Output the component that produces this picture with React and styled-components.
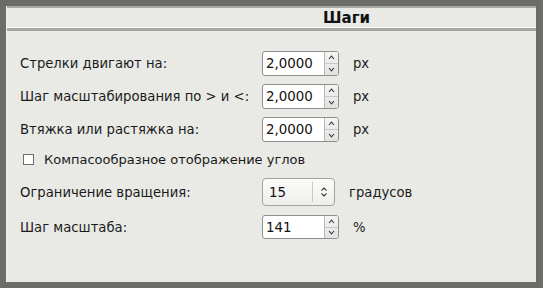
import styled, { createGlobalStyle } from "styled-components";

const GlobalStyle = createGlobalStyle`
  html, body {
    margin: 0;
    padding: 0;
    background: #6b6b68;
  }
  body {
    font-family: "DejaVu Sans", Verdana, sans-serif;
  }
`

const Frame = styled.div`
  width: 543px;
  height: 288px;
  box-sizing: border-box;
  padding: 6px 7px 6px 6px;
`

const Panel = styled.div`
  height: 100%;
  background: #e9eae6;
  display: flex;
  flex-direction: column;
  border-left: 1px solid #f1f1ef;
  box-sizing: border-box;
`

const Header = styled.div`
  height: 22px;
  box-sizing: border-box;
  border-top: 2px solid #aaa6a4;
  border-bottom: 1px solid #ffffff;
  display: flex;
  align-items: center;
  padding-left: 316px;
  font-size: 15px;
  font-weight: bold;
  color: #111;
`

const HeaderRule = styled.div`
  height: 3px;
  background: #aaa6a4;
`

const Form = styled.div`
  display: flex;
  flex-direction: column;
  padding: 20px 0 0 13px;
`

const Row = styled.div`
  display: flex;
  align-items: center;
  height: ${({ $h }) => $h}px;
  margin-top: ${({ $mt }) => $mt || 0}px;
  font-size: 13.2px;
  color: #1a1a1a;
`

const Label = styled.span`
  width: 242px;
  flex: none;
`

const Unit = styled.span`
  margin-left: ${({ $ml }) => $ml}px;
`

const SpinBox = styled.div`
  width: 77px;
  height: 100%;
  box-sizing: border-box;
  border: 1px solid #8e8e8c;
  border-radius: 3px;
  background: #fff;
  display: flex;
  overflow: hidden;
`

const SpinText = styled.span`
  flex: 1;
  display: flex;
  align-items: center;
  padding-left: 3px;
  font-size: 13.4px;
  color: #111;
`

const SpinButtons = styled.div`
  width: 13px;
  border-left: 1px solid #b8b8b6;
  background: linear-gradient(#f4f4f3, #e2e2e0);
  display: flex;
  flex-direction: column;
`

const SpinHalf = styled.div`
  flex: 1;
  display: flex;
  align-items: center;
  justify-content: center;
  & + & {
    border-top: 1px solid #c8c8c6;
  }
`

const Combo = styled.div`
  width: 73px;
  height: 100%;
  box-sizing: border-box;
  border: 1px solid #a3a3a0;
  border-radius: 4px;
  background: linear-gradient(#fbfbfa, #eeeeec);
  display: flex;
  align-items: center;
`

const ComboText = styled.span`
  flex: 1;
  padding-left: 6px;
  font-size: 13.4px;
  color: #111;
`

const ComboSep = styled.div`
  width: 1px;
  height: 20px;
  background: #c9c9c6;
`

const ComboArrow = styled.div`
  width: 21px;
  display: flex;
  justify-content: center;
`

const CheckRow = styled.label`
  display: flex;
  align-items: center;
  height: 18px;
  margin-top: 8px;
  padding-left: 3px;
  font-size: 13px;
  color: #1a1a1a;
`

const CheckBox = styled.span`
  width: 9px;
  height: 9px;
  border: 1px solid #6f6f6d;
  background: #fff;
  margin-right: 10px;
`

function Chevron({ up }) {
  return (
    <svg width="7" height="5" viewBox="0 0 7 5">
      <path
        d={up ? "M1 4 L3.5 1.2 L6 4" : "M1 1 L3.5 3.8 L6 1"}
        fill="none"
        stroke="#3a3a3a"
        strokeWidth="1.1"
      />
    </svg>
  )
}

function Spin({ value }) {
  return (
    <SpinBox>
      <SpinText>{value}</SpinText>
      <SpinButtons>
        <SpinHalf><Chevron up /></SpinHalf>
        <SpinHalf><Chevron /></SpinHalf>
      </SpinButtons>
    </SpinBox>
  )
}

export default function App() {
  return (
    <Frame>
      <GlobalStyle />
      <Panel>
        <Header>Шаги</Header>
        <HeaderRule />
        <Form>
          <Row $h={25}>
            <Label>Стрелки двигают на:</Label>
            <Spin value="2,0000" />
            <Unit $ml={14}>px</Unit>
          </Row>
          <Row $h={25} $mt={8}>
            <Label>Шаг масштабирования по &gt; и &lt;:</Label>
            <Spin value="2,0000" />
            <Unit $ml={14}>px</Unit>
          </Row>
          <Row $h={25} $mt={8}>
            <Label>Втяжка или растяжка на:</Label>
            <Spin value="2,0000" />
            <Unit $ml={14}>px</Unit>
          </Row>
          <CheckRow>
            <CheckBox />
            Компасообразное отображение углов
          </CheckRow>
          <Row $h={28} $mt={10}>
            <Label>Ограничение вращения:</Label>
            <Combo>
              <ComboText>15</ComboText>
              <ComboSep />
              <ComboArrow>
                <svg width="8" height="12" viewBox="0 0 8 12">
                  <path d="M1.5 4.5 L4 2 L6.5 4.5 M1.5 7.5 L4 10 L6.5 7.5" fill="none" stroke="#3a3a3a" strokeWidth="1.1" />
                </svg>
              </ComboArrow>
            </Combo>
            <Unit $ml={14}>градусов</Unit>
          </Row>
          <Row $h={24} $mt={9}>
            <Label>Шаг масштаба:</Label>
            <Spin value="141" />
            <Unit $ml={14}>%</Unit>
          </Row>
        </Form>
      </Panel>
    </Frame>
  )
}
